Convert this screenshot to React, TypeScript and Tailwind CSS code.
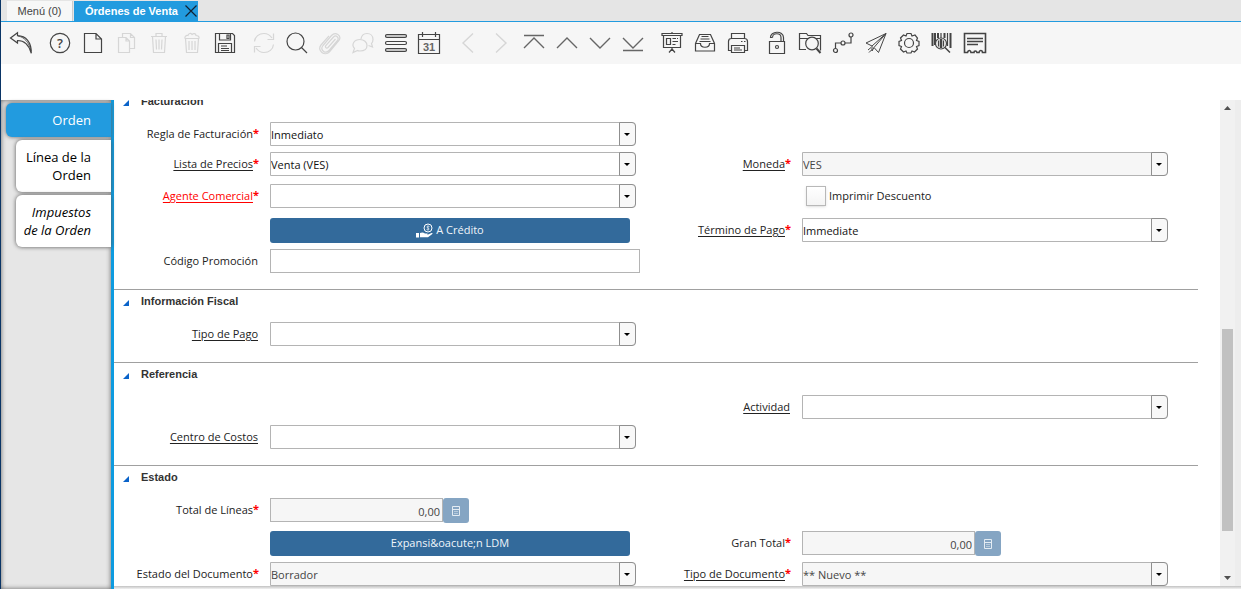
import { useState } from 'react';
import type { ReactNode } from 'react';
import clsx from 'clsx';

interface ToolItem {
  name: string;
  icon: ReactNode;
  disabled?: boolean;
}

const toolGroups: ToolItem[][] = [
  [
    {
      name: 'Deshacer',
      icon: (
        <>
          <path d="M8.500 4.700V1.800L1.500 7l7 5V9.500C15 9.500 20 14 22.300 22.300 22.500 11 17 5 8.500 4.700Z" />
          <path d="M9 5c6 1 11 6 13 15" strokeWidth=".8" />
        </>
      ),
    },
  ],
  [
    {
      name: 'Ayuda',
      icon: (
        <>
          <circle cx="12" cy="12" r="9.700" />
          <text x="12" y="16.500" textAnchor="middle" fontSize="13" fontWeight="600" fill="currentColor" stroke="none">?</text>
        </>
      ),
    },
    { name: 'Nuevo', icon: <path d="M3.500 2.500h11.500l5.500 5.500v13.500h-17Zm11.500 0v5.500h5.500" /> },
    {
      name: 'Copiar',
      disabled: true,
      icon: <path d="M4.500 6.500h7.500l3.500 3.500v11.500h-11Zm7.500 0v3.500h3.500M8.500 6.500v-4h8l4 4v11h-5M16.500 2.500v4h4" />,
    },
    {
      name: 'Eliminar',
      disabled: true,
      icon: <path d="M4 5.500h16M9 5v-2.500h6v2.500M5.500 5.500l1 16h11l1-16M9 8.500l.5 10M12 8.500v10M15 8.500l-.5 10" />,
    },
    {
      name: 'Eliminar selección',
      disabled: true,
      icon: (
        <path d="M5 7.500h14M5.500 7.500l1 14h11l1-14M9 10v9M12 10v9M15 10v9M5 7.500c-.5-2 1-3.500 3-3 .5-2.500 3-2.500 4-1 1.500-1.500 4-1 4 1 2 0 3.500 1 3 3" />
      ),
    },
    {
      name: 'Guardar',
      icon: (
        <>
          <path d="M2.500 2.500h17l2 2v17h-19ZM6.500 2.500v6.500h11v-6.500M5.500 21.500v-9h13v9" />
          <path d="M14 4h2v3.500h-2ZM8 15h6M8 17.500h8M8 19.500h8" />
        </>
      ),
    },
  ],
  [
    {
      name: 'Refrescar',
      disabled: true,
      icon: <path d="M2.500 10.500C3 5.500 7 2.500 12 2.500c3.500 0 6 1.500 8 4.500M21.500 2.500v6h-6M21.500 13.500c-.500 5-4.500 8-9.500 8-3.500 0-6-1.500-8-4.500M2.500 21.500v-6h6" />,
    },
    { name: 'Buscar', icon: <path d="M19 10.500a8.500 8.500 0 1 1-17 0 8.500 8.500 0 0 1 17 0ZM16.500 16.500l5.500 5.500" /> },
    {
      name: 'Adjunto',
      disabled: true,
      icon: (
        <path d="M17.500 8 10 16.500c-1.500 1.500-3.500-.5-2-2.200L15.500 6c2.500-2.500 6 .5 4 3.500L11 19.500c-3.500 4-9.500-.5-6-5L13.500 4.500c4-4.500 10.500 0 7.500 5l-9.500 11.300C7 26-1.500 19.500 3 14L11 4.800" />
      ),
    },
    {
      name: 'Conversación',
      disabled: true,
      icon: (
        <path d="M10 8c.5-3.500 3-5.500 6-5.500 3.500 0 6 2.500 6 6 0 2-.5 3-1.500 4l1 3.500-4-1.500M9 8.500c4 0 7 2.500 7 6s-3 5.500-7 5.500c-1 0-2 0-2.500-.5L2 21.500l1.500-4C0 13.500 3 8.500 9 8.500Z" />
      ),
    },
    {
      name: 'Cuadrícula',
      icon: (
        <>
          <rect x="1.500" y="3.500" width="21" height="3" rx="1.500" fill="#c4c4c4" />
          <rect x="1.500" y="10.500" width="21" height="3" rx="1.500" />
          <rect x="1.500" y="17.500" width="21" height="3" rx="1.500" fill="#c4c4c4" />
        </>
      ),
    },
    {
      name: 'Histórico',
      icon: (
        <>
          <path d="M1.500 3.500h21v19h-21ZM1.500 8.500h21M5.500 1v5M18.500 1v5" />
          <text x="12" y="19.500" textAnchor="middle" fontSize="11" fontWeight="bold" className="font-['Liberation_Sans',sans-serif]" fill="#666" stroke="none">31</text>
        </>
      ),
    },
  ],
  [
    { name: 'Registro padre', disabled: true, icon: <path d="m17 2.500-10 9.500 10 9.500" strokeWidth="1.400" /> },
    { name: 'Registro detalle', disabled: true, icon: <path d="m7 2.500 10 9.500-10 9.500" strokeWidth="1.400" /> },
    { name: 'Primero', icon: <path d="M2 4.500h20M2 17l10-10 10 10" stroke="#666" strokeWidth="1.400" /> },
    { name: 'Anterior', icon: <path d="m2 17 10-10 10 10" stroke="#666" strokeWidth="1.400" /> },
    { name: 'Siguiente', icon: <path d="m2 7 10 10 10-10" stroke="#666" strokeWidth="1.400" /> },
    { name: 'Último', icon: <path d="m2 7 10 10 10-10M2 19.500h20" stroke="#666" strokeWidth="1.400" /> },
  ],
  [
    {
      name: 'Informe',
      icon: (
        <>
          <path d="M2 2.500h20v2H2ZM3.500 4.500h17v12h-17ZM12 16.500v2M12 18l-3 3.500M12 18l3 3.500M12 1v1.500" />
          <path d="M6.500 7.500h4v6h-4ZM12.500 7.500h3.500M12.500 10.500h5.500M12.500 13.500h3M17 7.500h1" />
        </>
      ),
    },
    {
      name: 'Archivo',
      icon: (
        <path d="M2.500 12.500 6.500 3.500h11l4 9v7.500h-19ZM2.500 12.500h5c0 5 9 5 9 0h5M8.500 5.500h7M7.500 8h9M6.500 10.500h11" />
      ),
    },
    {
      name: 'Imprimir',
      icon: (
        <>
          <path d="M5.500 7.500v-5h13v5M5.500 19.500h-3v-9c0-2 1-3 3-3h13c2 0 3 1 3 3v9h-3M5.500 14.500h13v7h-13Z" />
          <path d="M15 10.500h1.500M18 10.500h1.500M8 17h6M8 19h8" />
        </>
      ),
    },
  ],
  [
    {
      name: 'Bloquear',
      icon: (
        <>
          <path d="M4.500 10.500h15v12h-15ZM7.500 6.500h-2C5 0 18.500-1 18.500 6.500v4M7.500 6.500c0-5 8.500-5 8.500 0v4" />
          <circle cx="12" cy="16" r="1.500" />
        </>
      ),
    },
    {
      name: 'Zoom',
      icon: (
        <>
          <path d="M8 18.500H1.500v-16h7l1.500 2h12.500v15M1.500 7.500h21" />
          <circle cx="14" cy="12.500" r="6.300" fill="#f6f6f6" />
          <path d="m18.500 17.500 4 4.500" strokeWidth="2" />
        </>
      ),
    },
    {
      name: 'Flujo de trabajo',
      icon: (
        <>
          <circle cx="4.500" cy="19.500" r="2" />
          <circle cx="12" cy="12" r="2" />
          <circle cx="20" cy="4" r="2" />
          <path d="M4.500 17.500V12H10M14 12h6V6" />
        </>
      ),
    },
    {
      name: 'Solicitudes',
      icon: <path d="M22 2.500 2 12l6 3L22 2.500l-7.500 19-4.500-5L22 2.500M8 15v5l2-3.500M4 19l3-2.500M5 21.500l3-3" strokeWidth="1" />,
    },
    {
      name: 'Proceso',
      icon: (
        <>
          <circle cx="12" cy="12" r="4.500" />
          <path d="m10 2.500h4l1 2.500 3-1 2.500 3-1 2.500 2.500 1v4l-2.500 1 1 2.500-3 3-2.500-1-1 2h-4l-1-2-2.500 1-3-3 1-2.500L2 14.500v-4l2.500-1-1-2.500 3-3L9 5Z" />
        </>
      ),
    },
    {
      name: 'Información de producto',
      icon: (
        <>
          <path d="M2.500 2v13M5 2v12M20.500 2v15M8 2v5M14.500 2v5" strokeWidth="2" />
          <path d="M11 2v5M17.500 2v13" />
          <circle cx="11" cy="12.500" r="5.500" fill="#f6f6f6" />
          <path d="M8.500 9.500v6M13.500 9.500v6" />
          <path d="M11 8v9" strokeWidth="2.500" />
          <path d="m15 16.500 5 5" strokeWidth="1.500" />
        </>
      ),
    },
    {
      name: 'Recibo',
      icon: (
        <>
          <path d="M1.500 21.500v-19h21v19h-3c0-2.500-3-3-3.500 0h-2c-.500-2-3-2-3 0H8c-.5-3-3-2.500-3.500 0Z" strokeWidth="1.600" />
          <path d="M4 7.500h16M4 10.500h16M4 13.500h11" strokeWidth="1.600" />
        </>
      ),
    },
  ],
];

function Toolbar() {
  return (
    <div className="flex h-[42px] items-center gap-1.5 bg-[#f6f6f6] pl-1">
      {toolGroups.map((group, i) => (
        <div key={i} className="flex">
          {group.map((item) => (
            <button
              key={item.name}
              type="button"
              aria-label={item.name}
              disabled={item.disabled}
              className={clsx('flex w-[33px] pl-1', item.disabled ? 'text-[#d6d6d6]' : 'text-[#444]')}
            >
              <svg viewBox="0 0 24 24" className="size-6" fill="none" stroke="currentColor" strokeWidth="1.200">
                {item.icon}
              </svg>
            </button>
          ))}
        </div>
      ))}
    </div>
  );
}

interface LabelProps {
  id?: string;
  text: string;
  required?: boolean;
  link?: boolean;
  error?: boolean;
}

function FieldLabel({ id, text, required, link, error }: LabelProps) {
  return (
    <label htmlFor={id} className="flex h-6 items-center justify-end whitespace-nowrap pr-3">
      <span className={clsx(link && 'underline underline-offset-2', error && 'text-[#f00]')}>{text}</span>
      {required && <span className="w-[5px] pb-0.5 font-bold text-[#f00]">*</span>}
    </label>
  );
}

function Combo({ id, value = '', readOnly }: { id: string; value?: string; readOnly?: boolean }) {
  return (
    <div className="relative h-6">
      <select
        id={id}
        disabled={readOnly}
        defaultValue={value}
        className={clsx(
          'h-6 w-full appearance-none rounded-r-[4px] border border-[#b4b4b4] pt-0.5 opacity-100',
          readOnly ? 'bg-[#f6f6f6] text-[#444]' : 'bg-white text-[#111]'
        )}
      >
        <option value={value}>{value}</option>
      </select>
      <span className="pointer-events-none absolute inset-y-0 right-0 flex w-[17px] items-center justify-center rounded-r-[4px] border border-[#8f8f8f] bg-[#f8f8f8] pr-px">
        <svg viewBox="0 0 6 3" className="h-[3px] w-1.5">
          <path d="M0 0h6L3 3Z" />
        </svg>
      </span>
    </div>
  );
}

function ActionButton({ children }: { children: ReactNode }) {
  return (
    <button
      type="button"
      className="mr-1.5 flex h-[25px] items-center justify-center gap-[3px] rounded-[3px] bg-[#336a9b] text-[#f0f5fa]"
    >
      {children}
    </button>
  );
}

function AmountField({ id }: { id: string }) {
  return (
    <div className="flex">
      <input
        id={id}
        readOnly
        value="0,00"
        className="h-6 w-[173px] border border-[#b4b4b4] bg-[#f6f6f6] pt-0.5 pr-0.5 text-right text-[#444]"
      />
      <button
        type="button"
        aria-label="Calculadora"
        className="flex h-[25px] w-[26px] items-center justify-center rounded-[3px] bg-[#85a5c3]"
      >
        <svg viewBox="0 0 8 10" className="h-[10px] w-2" fill="none" stroke="#e4ecf3">
          <path d="M.5.5h7v9h-7ZM1 3.500h6" />
          <path d="M2 5.500h4M2 7.500h4" strokeWidth=".5" />
        </svg>
      </button>
    </div>
  );
}

function HandCoinIcon() {
  return (
    <svg viewBox="0 0 17 15" className="h-[15px] w-[17px]" fill="none" stroke="#fff">
      <circle cx="12" cy="5" r="4" />
      <path d="M13.500 3.500c-3-1-3.500 1-1.500 1.500s1.500 2.500-1.500 1.500M12 2.500v5" strokeWidth=".6" />
      <path d="M0 10h3v4.500H0ZM4 10c2-1 3.500-.5 5 .5h2.500v1.200H8.500h3l4-1.700c1-.3 1.500.5.5 1.200l-4 3H4Z" fill="#fff" stroke="none" />
    </svg>
  );
}

const rowGrid = 'grid grid-cols-[156px_minmax(0,1fr)_166px_minmax(0,1fr)] items-start pr-[30px]';

function Section({ title, children }: { title: string; children: ReactNode }) {
  const [open, setOpen] = useState(true);
  return (
    <section className="mr-[22px] border-t border-[#a0a0a0] pb-4">
      <button
        type="button"
        aria-expanded={open}
        onClick={() => setOpen(!open)}
        className="mb-2.5 flex h-[22px] items-center gap-3 pl-[9px] font-['Liberation_Sans',sans-serif] text-[11px] font-bold text-[#333]"
      >
        <svg viewBox="0 0 6 6" className="mt-1 size-1.5">
          <path d="M6 0v6H0Z" fill="#0a63c9" />
        </svg>
        {title}
      </button>
      {open && children}
    </section>
  );
}

const sideTabs = [
  { label: 'Línea de la Orden', italic: false },
  { label: 'Impuestos de la Orden', italic: true },
];

export default function App() {
  return (
    <div className="flex h-screen flex-col overflow-hidden border-l border-[#0a3566] bg-white font-['Open_Sans',sans-serif] text-[11px] text-[#222]">
      <header>
        <div className="flex h-[22px] items-end border-b border-[#229bdf] bg-[#e5e5e5] pl-1.5 font-['Liberation_Sans',sans-serif]">
          <button type="button" className="mr-px h-5 w-[66px] border-r border-[#ccc] bg-[#f7f7f7] text-[11px] text-[#444]">
            Menú (0)
          </button>
          <div className="flex h-5 w-[124px] items-center bg-[#229bdf] pl-[11px] text-white">
            <button type="button" className="flex-1 text-left text-[11px] font-bold whitespace-nowrap">Órdenes de Venta</button>
            <button type="button" aria-label="Cerrar">
              <svg viewBox="0 0 14 14" className="size-3.5" stroke="#123" strokeWidth="1.200">
                <path d="m1.500 1.500 11 11m0-11-11 11" />
              </svg>
            </button>
          </div>
        </div>
        <Toolbar />
        <div className="h-9" />
      </header>

      <div className="flex min-h-0 flex-1">
        <nav className="flex w-[113px] shrink-0 flex-col items-end gap-[3px] border-r-[3px] border-[#0d9be0] bg-[#e6e6e6] pt-[3px] text-[13px] leading-[18px] shadow-[inset_0_0_5px_#666]">
          <button
            type="button"
            className="h-[34px] w-[105px] rounded-l-[6px] bg-[#229bdf] pr-5 text-right font-medium text-white shadow-[0_0_4px_#666]"
          >
            Orden
          </button>
          {sideTabs.map((tab) => (
            <button
              key={tab.label}
              type="button"
              className={clsx(
                'h-[52px] w-[95px] rounded-l-[6px] bg-white pr-5 pl-1.5 text-right text-black shadow-[0_0_4px_#555]',
                tab.italic && 'italic'
              )}
            >
              {tab.label}
            </button>
          ))}
        </nav>

        <div className="flex min-w-0 flex-1 flex-col">
          <div className="flex min-h-0 flex-1">
            <main className="min-w-0 flex-1 overflow-hidden">
              <div className="-mt-[11px]">
                <Section title="Facturación">
                  <div className={clsx(rowGrid, 'h-[30px]')}>
                    <FieldLabel id="regla" text="Regla de Facturación" required />
                    <Combo id="regla" value="Inmediato" />
                  </div>
                  <div className={clsx(rowGrid, 'h-8')}>
                    <FieldLabel id="lista" text="Lista de Precios" required link />
                    <Combo id="lista" value="Venta (VES)" />
                    <FieldLabel id="moneda" text="Moneda" required link />
                    <Combo id="moneda" value="VES" readOnly />
                  </div>
                  <div className={clsx(rowGrid, 'h-[34px]')}>
                    <FieldLabel id="agente" text="Agente Comercial" required link error />
                    <Combo id="agente" />
                    <label className="col-start-4 flex h-6 items-center gap-[3px] pl-1">
                      <input
                        type="checkbox"
                        className="size-5 appearance-none border border-[#b8b8b8] bg-gradient-to-b from-white to-[#f4f4f4] shadow-sm checked:bg-[#336a9b]"
                      />
                      Imprimir Descuento
                    </label>
                  </div>
                  <div className={clsx(rowGrid, 'h-[31px]')}>
                    <span />
                    <ActionButton>
                      <HandCoinIcon />
                      A Crédito
                    </ActionButton>
                    <FieldLabel id="termino" text="Término de Pago" required link />
                    <Combo id="termino" value="Immediate" />
                  </div>
                  <div className={rowGrid}>
                    <FieldLabel id="promo" text="Código Promoción" />
                    <input id="promo" className="-mr-1 h-6 border border-[#b4b4b4] px-px" />
                  </div>
                </Section>

                <Section title="Información Fiscal">
                  <div className={rowGrid}>
                    <FieldLabel id="tipo-pago" text="Tipo de Pago" link />
                    <Combo id="tipo-pago" />
                  </div>
                </Section>

                <Section title="Referencia">
                  <div className={clsx(rowGrid, 'h-[30px]')}>
                    <span className="col-span-2" />
                    <FieldLabel id="actividad" text="Actividad" link />
                    <Combo id="actividad" />
                  </div>
                  <div className={rowGrid}>
                    <FieldLabel id="centro" text="Centro de Costos" link />
                    <Combo id="centro" />
                  </div>
                </Section>

                <Section title="Estado">
                  <div className={clsx(rowGrid, 'h-[33px]')}>
                    <FieldLabel id="total" text="Total de Líneas" required />
                    <AmountField id="total" />
                  </div>
                  <div className={clsx(rowGrid, 'h-[31px]')}>
                    <span />
                    <ActionButton>{'Expansi&oacute;n LDM'}</ActionButton>
                    <FieldLabel id="gran-total" text="Gran Total" required />
                    <AmountField id="gran-total" />
                  </div>
                  <div className={rowGrid}>
                    <FieldLabel id="estado-doc" text="Estado del Documento" required />
                    <Combo id="estado-doc" value="Borrador" readOnly />
                    <FieldLabel id="tipo-doc" text="Tipo de Documento" required link />
                    <Combo id="tipo-doc" value="** Nuevo **" readOnly />
                  </div>
                </Section>
              </div>
            </main>

            <div className="flex w-[15px] shrink-0 flex-col items-center bg-[#f1f1f1]">
              <svg viewBox="0 0 15 17" className="h-[17px] w-[15px] shrink-0" fill="#505050">
                <path d="M4 10h7l-3.500-4Z" />
              </svg>
              <div className="grow-[212]" />
              <div className="w-[11px] grow-[202] bg-[#c1c1c1]" />
              <div className="grow-[38]" />
              <svg viewBox="0 0 15 17" className="h-[17px] w-[15px] shrink-0" fill="#505050">
                <path d="M4 7h7l-3.500 4Z" />
              </svg>
            </div>
            <div className="w-1.5 shrink-0 bg-[#ededed]" />
          </div>
          <div className="h-[3px] shrink-0 bg-gradient-to-b from-[#c2c2c2] to-[#f2f2f2]" />
        </div>
      </div>
    </div>
  );
}
